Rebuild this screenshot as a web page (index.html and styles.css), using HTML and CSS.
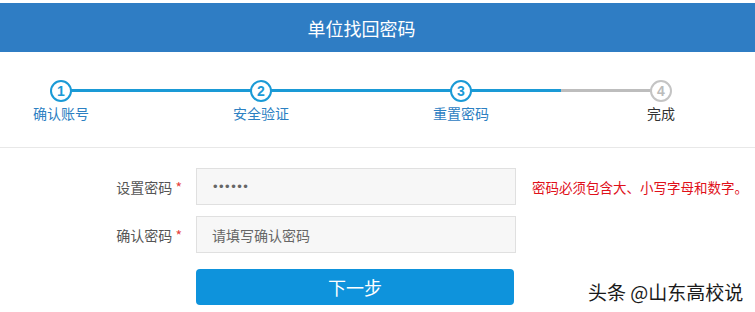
FILE: index.html
```html
<!DOCTYPE html>
<html lang="zh">
<head>
<meta charset="utf-8">
<link rel="stylesheet" href="styles.css">
</head>
<body>
<div class="header">单位找回密码</div>
<div class="steps">
  <div class="track"></div>
  <div class="step done"><span class="dot">1</span><span class="label">确认账号</span></div>
  <div class="step done"><span class="dot">2</span><span class="label">安全验证</span></div>
  <div class="step done"><span class="dot">3</span><span class="label">重置密码</span></div>
  <div class="step todo"><span class="dot">4</span><span class="label">完成</span></div>
</div>
<form class="form">
  <div class="row">
    <label class="lbl">设置密码 <span class="req">*</span></label>
    <input class="field pwd" type="password" value="123456">
    <span class="err">密码必须包含大、小写字母和数字。</span>
  </div>
  <div class="row">
    <label class="lbl">确认密码 <span class="req">*</span></label>
    <input class="field" type="password" placeholder="请填写确认密码">
  </div>
  <button class="btn" type="button">下一步</button>
</form>
<div class="watermark">头条 @山东高校说</div>
</body>
</html>
```
FILE: styles.css
```css
* { box-sizing: border-box; }
body {
  margin: 0;
  background: #fff;
  font-family: "Noto Sans CJK SC", "Noto Sans", sans-serif;
  position: relative;
  height: 312px;
  overflow: hidden;
}
.header {
  margin-top: 3px;
  height: 49px;
  background: #2f7dc4;
  color: #fff;
  font-size: 18px;
  display: flex;
  align-items: center;
  justify-content: center;
  padding-right: 32px;
}
.steps {
  position: relative;
  height: 96px;
  border-bottom: 1px solid #e8e8e8;
  display: flex;
  gap: 80px;
  padding: 28px 0 0 1px;
}
.track {
  position: absolute;
  left: 61px;
  top: 37px;
  width: 600px;
  height: 3px;
  background: linear-gradient(to right, #1a9ad6 0, #1a9ad6 500px, #bdbdbd 500px);
}
.step {
  position: relative;
  width: 120px;
  display: flex;
  flex-direction: column;
  align-items: center;
}
.dot {
  width: 22px;
  height: 22px;
  border-radius: 50%;
  border: 2.5px solid #1a9ad6;
  background: #fff;
  color: #1a9ad6;
  font-family: "Liberation Sans", Arial, sans-serif;
  font-weight: bold;
  font-size: 14px;
  display: flex;
  align-items: center;
  justify-content: center;
  line-height: 1;
}
.label {
  margin-top: 1px;
  font-size: 14px;
  line-height: 20px;
  color: #2c80c2;
}
.todo .dot { border-color: #c4c4c4; color: #bbb; }
.todo .label { color: #333; }
.form {
  padding-top: 20px;
  display: flex;
  flex-direction: column;
  gap: 11px;
}
.row {
  display: flex;
  align-items: center;
}
.lbl {
  width: 182px;
  text-align: right;
  font-size: 14px;
  color: #555;
  margin-right: 14px;
}
.req { color: #e6433d; }
.field {
  width: 320px;
  height: 37px;
  background: #f7f7f7;
  border: 1px solid #e0e0e0;
  padding: 0 15px;
  font-family: "Noto Sans CJK SC", sans-serif;
  font-size: 14px;
  color: #666;
  outline: none;
}
.field::placeholder { color: #666; }
.pwd {
  font-family: "Liberation Sans", Arial, sans-serif;
  font-size: 13px;
  letter-spacing: 1.5px;
  color: #666;
  padding-left: 16px;
}
.err {
  margin-left: 16px;
  font-size: 13.5px;
  color: #e0101a;
  white-space: nowrap;
}
.btn {
  margin: 5px 0 0 196px;
  width: 318px;
  height: 36px;
  border: 0;
  border-radius: 4px;
  background: #0e93dc;
  color: #fff;
  font-family: "Noto Sans CJK SC", sans-serif;
  font-size: 18px;
}
.watermark {
  position: absolute;
  left: 588px;
  top: 279px;
  font-size: 19px;
  line-height: 26px;
  color: #1a1a1a;
  text-shadow: 0 0 2px #fff, 0 0 2px #fff;
}
```
